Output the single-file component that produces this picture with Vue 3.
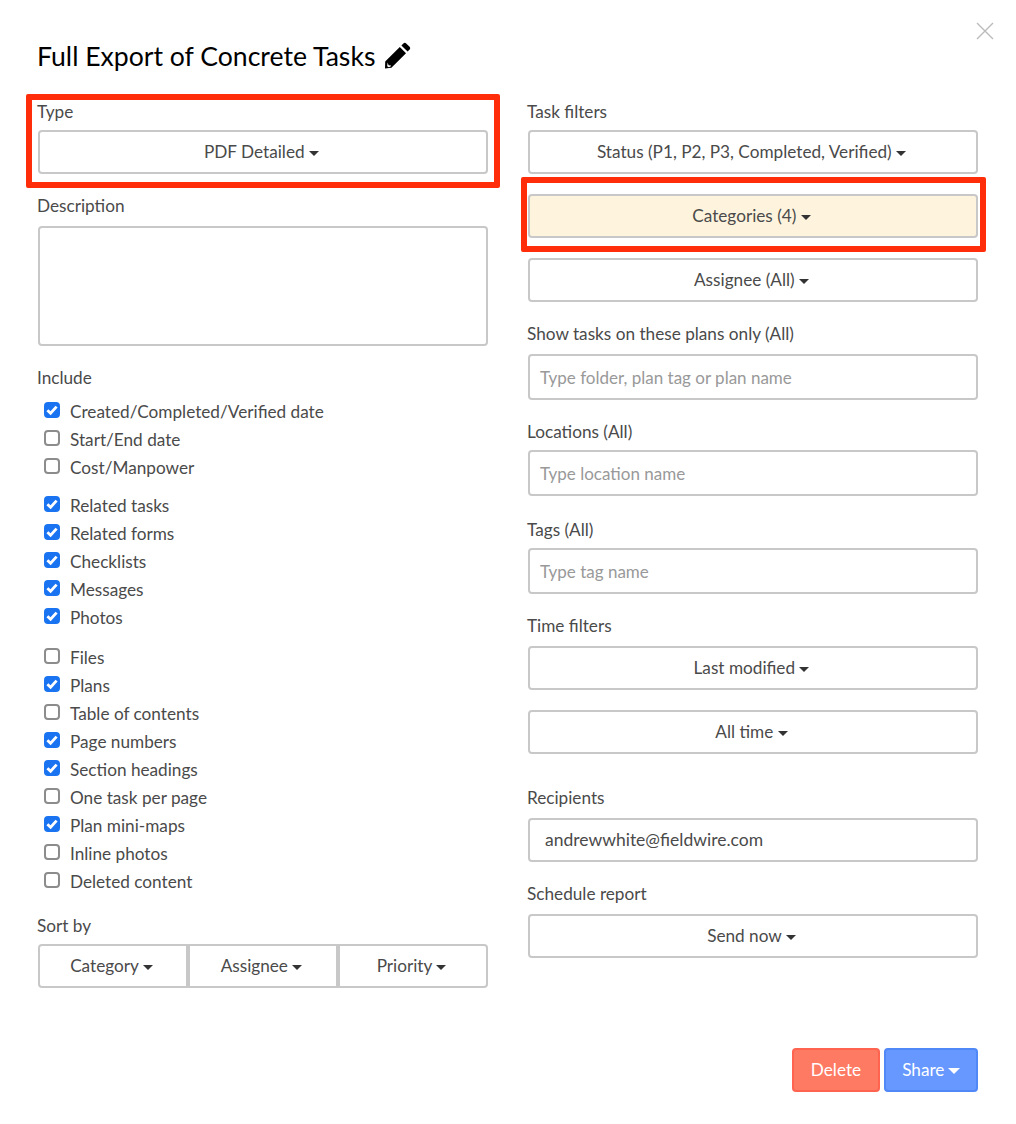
<script setup>
import { ref } from 'vue';

const groups = ref([
  [
    { label: 'Created/Completed/Verified date', on: true },
    { label: 'Start/End date', on: false },
    { label: 'Cost/Manpower', on: false },
  ],
  [
    { label: 'Related tasks', on: true },
    { label: 'Related forms', on: true },
    { label: 'Checklists', on: true },
    { label: 'Messages', on: true },
    { label: 'Photos', on: true },
  ],
  [
    { label: 'Files', on: false },
    { label: 'Plans', on: true },
    { label: 'Table of contents', on: false },
    { label: 'Page numbers', on: true },
    { label: 'Section headings', on: true },
    { label: 'One task per page', on: false },
    { label: 'Plan mini-maps', on: true },
    { label: 'Inline photos', on: false },
    { label: 'Deleted content', on: false },
  ],
]);

const sorts = ['Category', 'Assignee', 'Priority'];
</script>

<template>
  <div class="modal">
    <svg class="close" width="20" height="20" viewBox="0 0 20 20">
      <path d="M2 2 L18 18 M18 2 L2 18" stroke="#bbb" stroke-width="1.4" fill="none" />
    </svg>

    <h1 class="title">
      Full Export of Concrete Tasks
      <svg class="pencil" width="28" height="28" viewBox="0 0 28 28">
        <path d="M2.2 19.6 L16.8 5 L23 11.2 L8.4 25.8 L2 26.4 Z M4.6 20.6 L4.2 24.2 L5.8 25.2 L7.6 24.6 L8 23.4 L5.6 23.2 Z M18.4 3.4 L20.4 1.4 C21.2 0.6 22.4 0.6 23.2 1.4 L26.6 4.8 C27.4 5.6 27.4 6.8 26.6 7.6 L24.6 9.6 Z" fill="#000" fill-rule="evenodd" />
      </svg>
    </h1>

    <div class="columns">
      <div class="col">
        <label class="lbl">Type</label>
        <button class="btn">PDF Detailed <span class="caret"></span></button>

        <label class="lbl desc-lbl">Description</label>
        <textarea class="area"></textarea>

        <label class="lbl include-lbl">Include</label>
        <div v-for="(group, i) in groups" :key="i" class="check-group">
          <div v-for="item in group" :key="item.label" class="check-row">
            <span class="box" :class="{ on: item.on }">
              <svg v-if="item.on" width="16" height="16" viewBox="0 0 16 16">
                <path d="M3.4 8.2 L6.6 11.3 L12.6 4.6" stroke="#fff" stroke-width="2.8" fill="none" />
              </svg>
            </span>
            {{ item.label }}
          </div>
        </div>

        <label class="lbl sort-lbl">Sort by</label>
        <div class="btn-group">
          <button v-for="s in sorts" :key="s" class="btn">{{ s }} <span class="caret"></span></button>
        </div>
      </div>

      <div class="col">
        <label class="lbl">Task filters</label>
        <button class="btn">Status (P1, P2, P3, Completed, Verified) <span class="caret"></span></button>
        <button class="btn cat">Categories (4) <span class="caret"></span></button>
        <button class="btn assignee">Assignee (All) <span class="caret"></span></button>

        <label class="lbl plans-lbl">Show tasks on these plans only (All)</label>
        <input class="field" placeholder="Type folder, plan tag or plan name" />

        <label class="lbl loc-lbl">Locations (All)</label>
        <input class="field" placeholder="Type location name" />

        <label class="lbl tags-lbl">Tags (All)</label>
        <input class="field" placeholder="Type tag name" />

        <label class="lbl time-lbl">Time filters</label>
        <button class="btn">Last modified <span class="caret"></span></button>
        <button class="btn alltime">All time <span class="caret"></span></button>

        <label class="lbl rec-lbl">Recipients</label>
        <div class="recipients">andrewwhite@fieldwire.com</div>

        <label class="lbl sched-lbl">Schedule report</label>
        <button class="btn">Send now <span class="caret"></span></button>
      </div>
    </div>

    <div class="footer">
      <button class="action delete">Delete</button>
      <button class="action share">Share <span class="caret white"></span></button>
    </div>

    <!-- red annotation boxes drawn over the screenshot -->
    <div class="mark mark-type"></div>
    <div class="mark mark-cat"></div>
  </div>
</template>

<style>
body {
  background: #fff;
}
</style>

<style scoped>
.modal {
  position: relative;
  width: 1016px;
  height: 1124px;
  box-sizing: border-box;
  padding: 37px 38px 0;
  font-family: Lato, "Open Sans", sans-serif;
  font-size: 17.2px;
  color: #4a4a4a;
  overflow: hidden;
}
.close {
  position: absolute;
  left: 975px;
  top: 21px;
}
.title {
  margin: 0 0 0 -1px;
  height: 38px;
  line-height: 38px;
  font-size: 26.6px;
  font-weight: 400;
  color: #000;
  display: flex;
  align-items: center;
  gap: 8px;
}
.pencil {
  display: block;
  margin-top: -1px;
}
.columns {
  display: grid;
  grid-template-columns: 450px 450px;
  column-gap: 40px;
  margin-top: 25px;
}
.col {
  display: flex;
  flex-direction: column;
  min-width: 0;
}
.lbl {
  display: block;
  height: 24px;
  line-height: 24px;
  margin-left: -1px;
  margin-bottom: 6px;
}
.btn {
  display: block;
  width: 100%;
  height: 44px;
  box-sizing: border-box;
  border: 2px solid #c8c8c8;
  border-radius: 4px;
  background: #fff;
  font: inherit;
  color: #4a4a4a;
  padding: 0 3px 2px 0;
  text-align: center;
}
.caret {
  display: inline-block;
  width: 0;
  height: 0;
  margin-left: 0;
  vertical-align: 2px;
  border-top: 5px solid #333;
  border-left: 5px solid transparent;
  border-right: 5px solid transparent;
}
.caret.white {
  margin-left: -1px;
  border-top: 6px solid #fff;
  border-left: 6px solid transparent;
  border-right: 6px solid transparent;
}
.cat {
  margin-top: 20px;
  background: #fef4de;
}
.assignee {
  margin-top: 20px;
}
.alltime {
  margin-top: 20px;
}
.area {
  display: block;
  width: 100%;
  height: 120px;
  box-sizing: border-box;
  border: 2px solid #c8c8c8;
  border-radius: 4px;
  resize: none;
  margin: 0;
}
.desc-lbl {
  margin-top: 20px;
  margin-bottom: 8px;
}
.include-lbl {
  margin-top: 20px;
  margin-bottom: 7px;
}
.check-group {
  margin-bottom: 10px;
}
.check-group:nth-of-type(2) {
  margin-bottom: 12px;
}
.check-row {
  display: flex;
  align-items: center;
  height: 28px;
  gap: 10px;
  margin-left: 6px;
}
.box {
  width: 16px;
  height: 16px;
  margin-top: -2px;
  box-sizing: border-box;
  border: 2px solid #8c8c8c;
  border-radius: 4px;
  background: #fff;
  position: relative;
  flex: none;
}
.box.on {
  background: #1a73f0;
  border-color: #1a73f0;
}
.box svg {
  position: absolute;
  left: -2px;
  top: -2px;
}
.sort-lbl {
  margin-top: 9px;
}
.btn-group {
  display: flex;
}
.btn-group .btn {
  flex: 1;
  border-radius: 0;
}
.btn-group .btn:first-child {
  border-radius: 4px 0 0 4px;
}
.btn-group .btn:last-child {
  border-radius: 0 4px 4px 0;
}
.field {
  display: block;
  width: 100%;
  height: 46px;
  box-sizing: border-box;
  border: 2px solid #c8c8c8;
  border-radius: 4px;
  padding: 0 10px;
  font: inherit;
  font-size: 17px;
  margin: 0;
  outline: none;
}
.field::placeholder {
  color: #999;
  opacity: 1;
}
.plans-lbl {
  margin-top: 20px;
  margin-bottom: 8px;
}
.loc-lbl {
  margin-top: 20px;
  margin-bottom: 6px;
}
.tags-lbl {
  margin-top: 22px;
  margin-bottom: 6px;
}
.time-lbl {
  margin-top: 20px;
  margin-bottom: 8px;
}
.rec-lbl {
  margin-top: 32px;
  margin-bottom: 8px;
}
.recipients {
  height: 44px;
  line-height: 40px;
  box-sizing: border-box;
  border: 2px solid #c8c8c8;
  border-radius: 4px;
  padding-left: 15px;
  font-size: 17.5px;
}
.sched-lbl {
  margin-top: 20px;
  margin-bottom: 8px;
}
.footer {
  position: absolute;
  right: 38px;
  top: 1048px;
  display: flex;
  gap: 4px;
}
.action {
  height: 44px;
  box-sizing: border-box;
  border-radius: 4px;
  font: inherit;
  color: #fff;
  padding: 0 0 2px;
}
.delete {
  width: 88px;
  background: #ff7a63;
  border: 2px solid #ff6450;
}
.share {
  width: 94px;
  background: #6698ff;
  border: 2px solid #5088f8;
}
.mark {
  position: absolute;
  box-sizing: border-box;
  border: 6px solid #ff2d09;
  border-radius: 2px;
}
.mark-type {
  left: 26px;
  top: 94px;
  width: 474px;
  height: 94px;
}
.mark-cat {
  left: 521px;
  top: 177px;
  width: 465px;
  height: 75px;
}
</style>
